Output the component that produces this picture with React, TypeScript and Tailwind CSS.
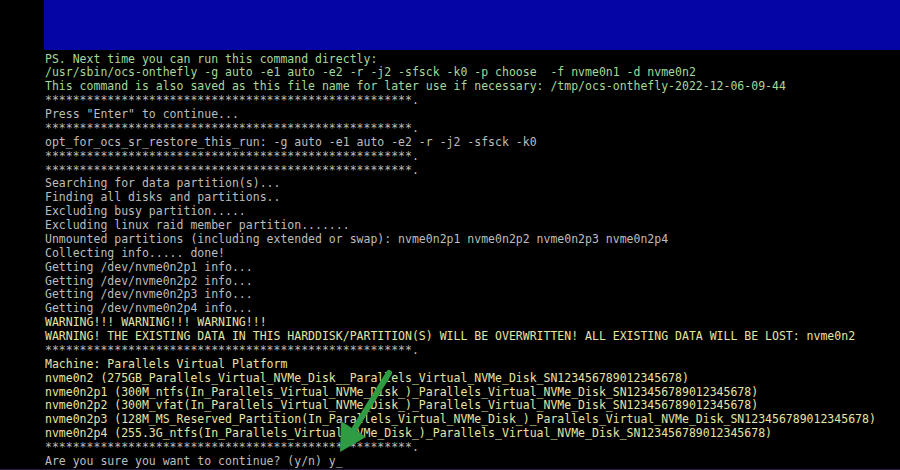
const STARS = "*".repeat(53) + ".";

type Line = { text: string; tone: "green" | "gray" | "yellow" };

const lines: Line[] = [
  { text: "PS. Next time you can run this command directly:", tone: "green" },
  {
    text: "/usr/sbin/ocs-onthefly -g auto -e1 auto -e2 -r -j2 -sfsck -k0 -p choose  -f nvme0n1 -d nvme0n2",
    tone: "green",
  },
  {
    text: "This command is also saved as this file name for later use if necessary: /tmp/ocs-onthefly-2022-12-06-09-44",
    tone: "green",
  },
  { text: STARS, tone: "gray" },
  { text: 'Press "Enter" to continue...', tone: "gray" },
  { text: STARS, tone: "gray" },
  { text: "opt_for_ocs_sr_restore_this_run: -g auto -e1 auto -e2 -r -j2 -sfsck -k0", tone: "gray" },
  { text: STARS, tone: "gray" },
  { text: STARS, tone: "gray" },
  { text: "Searching for data partition(s)...", tone: "gray" },
  { text: "Finding all disks and partitions..", tone: "gray" },
  { text: "Excluding busy partition.....", tone: "gray" },
  { text: "Excluding linux raid member partition.......", tone: "gray" },
  {
    text: "Unmounted partitions (including extended or swap): nvme0n2p1 nvme0n2p2 nvme0n2p3 nvme0n2p4",
    tone: "gray",
  },
  { text: "Collecting info..... done!", tone: "gray" },
  { text: "Getting /dev/nvme0n2p1 info...", tone: "gray" },
  { text: "Getting /dev/nvme0n2p2 info...", tone: "gray" },
  { text: "Getting /dev/nvme0n2p3 info...", tone: "gray" },
  { text: "Getting /dev/nvme0n2p4 info...", tone: "gray" },
  { text: "WARNING!!! WARNING!!! WARNING!!!", tone: "yellow" },
  {
    text: "WARNING! THE EXISTING DATA IN THIS HARDDISK/PARTITION(S) WILL BE OVERWRITTEN! ALL EXISTING DATA WILL BE LOST: nvme0n2",
    tone: "yellow",
  },
  { text: STARS, tone: "gray" },
  { text: "Machine: Parallels Virtual Platform", tone: "yellow" },
  {
    text: "nvme0n2 (275GB_Parallels_Virtual_NVMe_Disk__Parallels_Virtual_NVMe_Disk_SN123456789012345678)",
    tone: "yellow",
  },
  {
    text: "nvme0n2p1 (300M_ntfs(In_Parallels_Virtual_NVMe_Disk_)_Parallels_Virtual_NVMe_Disk_SN123456789012345678)",
    tone: "yellow",
  },
  {
    text: "nvme0n2p2 (300M_vfat(In_Parallels_Virtual_NVMe_Disk_)_Parallels_Virtual_NVMe_Disk_SN123456789012345678)",
    tone: "yellow",
  },
  {
    text: "nvme0n2p3 (128M_MS_Reserved_Partition(In_Parallels_Virtual_NVMe_Disk_)_Parallels_Virtual_NVMe_Disk_SN123456789012345678)",
    tone: "yellow",
  },
  {
    text: "nvme0n2p4 (255.3G_ntfs(In_Parallels_Virtual_NVMe_Disk_)_Parallels_Virtual_NVMe_Disk_SN123456789012345678)",
    tone: "yellow",
  },
  { text: STARS, tone: "gray" },
  { text: "Are you sure you want to continue? (y/n) y_", tone: "gray" },
];

const toneClass = {
  green: "text-[#a4d99a]",
  gray: "text-[#bdbdbd]",
  yellow: "text-[#e6e4a6]",
};

// green pointer drawn over the prompt
const Arrow = () => (
  <svg
    className="pointer-events-none absolute left-0 top-0"
    width={900}
    height={470}
    viewBox="0 0 900 470"
  >
    <line x1={389} y1={373} x2={355} y2={428} stroke="#2f9c43" strokeWidth={6} strokeLinecap="round" />
    <polygon points="340,452 366,437 341,421" fill="#2f9c43" />
  </svg>
);

export default function App() {
  return (
    <div className="relative flex h-[470px] w-[900px] flex-col overflow-hidden bg-black font-['DejaVu_Sans_Mono',monospace] text-[11.5px] leading-[13.88px]">
      <div className="flex flex-1">
        <div className="w-[44px] shrink-0 bg-black" />
        <div className="flex flex-1 flex-col">
          <div className="h-[50px] bg-[#0505a6]" />
          <div className="flex flex-col pl-[1px] pt-[2.5px]">
            {lines.map((line, i) => (
              <div key={i} className={`whitespace-pre ${toneClass[line.tone]}`}>
                {line.text}
              </div>
            ))}
          </div>
        </div>
      </div>
      <div className="h-[4px] bg-[#221843]" />
      <Arrow />
    </div>
  );
}
